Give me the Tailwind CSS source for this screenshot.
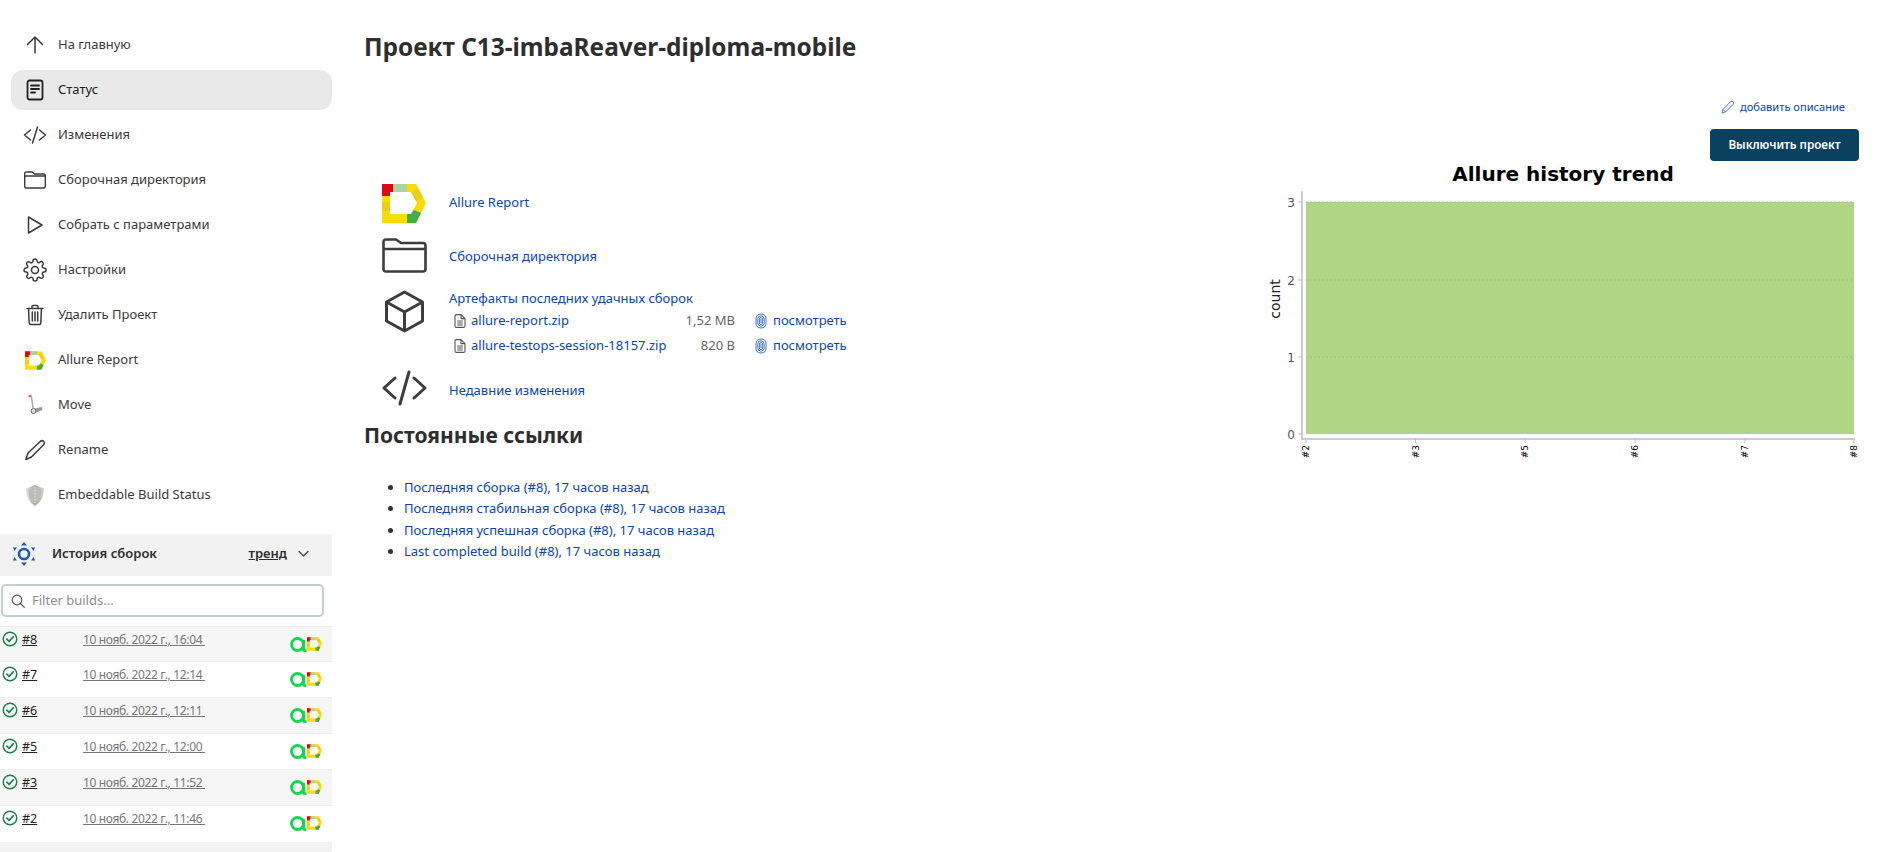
<!DOCTYPE html>
<html>

<head>
  <meta charset="utf-8">
  <script src="https://cdn.jsdelivr.net/npm/@tailwindcss/browser@4"></script>
  <title>Проект C13-imbaReaver-diploma-mobile</title>
</head>

<body class="h-[852px] w-[1892px] overflow-hidden bg-white font-['Noto_Sans',sans-serif] text-[13px] text-[#333]">
  <!-- icons used more than once -->
  <svg class="hidden">
    <symbol id="logo" viewBox="0 0 44 39">
      <path fill="#ffdc00" fill-rule="evenodd" d="M0 0H34L44 19 34 39H0ZM8 8V30H29L35 19 29 8Z" />
      <path fill="#e8cf18" d="M0 18H8V27H0ZM29 8 36 4 41 13 34 17Z" />
      <path fill="#e30613" d="M0 0H11V8H8V12H0Z" />
      <path fill="#a9d5a0" d="M11 0H25V8H11Z" />
      <path fill="#3fae49" d="M25 30H29L32 26 39 29 34 39H25Z" />
    </symbol>
    <symbol id="code" viewBox="0 0 45 36">
      <path fill="none" stroke="currentColor" stroke-width="3" stroke-linecap="round" stroke-linejoin="round" d="M13 8 2 18 13 28M32 8 43 18 32 28M27 2 18 34" />
    </symbol>
    <symbol id="folder" viewBox="0 0 45 35">
      <path fill="none" stroke="currentColor" stroke-width="2.6" stroke-linejoin="round" d="M1.5 8V4Q1.500 1.500 4 1.500H14L19 5H41Q43.500 5 43.500 7.500V31Q43.500 33.500 41 33.500H4Q1.500 33.500 1.500 31ZM1.500 11H43.500" />
    </symbol>
    <symbol id="file" viewBox="0 0 12 14">
      <path fill="none" stroke="#555" stroke-width="1.100" stroke-linejoin="round" d="M1 2Q1 .6 2.400 .6H7L11 4.600V12Q11 13.400 9.600 13.400H2.400Q1 13.400 1 12ZM7 .6V4.600H11M3.200 7H8.800M3.200 9H8.800M3.200 11H8.800" />
    </symbol>
    <symbol id="print" viewBox="0 0 12 16">
      <g fill="none" stroke="#3f78d0" stroke-width="1">
        <path d="M1 6Q1 1 6 1T11 6V10Q11 15 6 15T1 10Z" />
        <path d="M2.800 6Q2.800 2.800 6 2.800T9.200 6V10Q9.200 13.200 6 13.200T2.800 10Z" />
        <path d="M4.400 6Q4.400 4.500 6 4.500T7.600 6V10Q7.600 11.600 6 11.600T4.400 10Z" />
        <path d="M6 6V10" />
      </g>
    </symbol>
    <symbol id="ok" viewBox="0 0 16 16">
      <circle cx="8" cy="8" r="6.800" fill="none" stroke="#138347" stroke-width="1.400" />
      <path d="M4.800 8.200 7.100 10.400 11.200 5.900" fill="none" stroke="#138347" stroke-width="1.600" stroke-linecap="round" stroke-linejoin="round" />
    </symbol>
    <symbol id="testops" viewBox="0 0 17 15">
      <circle cx="7.500" cy="7.500" r="6" fill="none" stroke="#0ed84f" stroke-width="2.800" />
      <path d="M13.500 3V12.500Q13.500 13.600 15 13.600H16.500" fill="none" stroke="#0ed84f" stroke-width="2.800" />
    </symbol>
  </svg>

  <div class="flex h-full">
    <aside class="flex h-full w-[332px] shrink-0 flex-col">
      <nav class="flex flex-col gap-[5px] pt-[25px] text-[#3a3a3a]">
        <a class="ml-[11px] flex h-[40px] items-center gap-[11px] pl-[12px]">
          <svg class="size-6" viewBox="0 0 24 24" fill="none" stroke="currentColor" stroke-width="1.500" stroke-linecap="round" stroke-linejoin="round"><path d="M12 20V4M4.500 11.500 12 4l7.500 7.500" /></svg>
          <span>На главную</span>
        </a>
        <a class="ml-[11px] flex h-[40px] items-center gap-[11px] rounded-xl bg-[#e9e9e9] pl-[12px] text-[#222]">
          <svg class="size-6" viewBox="0 0 24 24" fill="none" stroke="currentColor" stroke-width="1.800" stroke-linecap="round" stroke-linejoin="round"><rect x="4.500" y="2.500" width="15" height="19" rx="2" /><path d="M8 7.500h8M8 11h8M8 14.500h4" /></svg>
          <span>Статус</span>
        </a>
        <a class="ml-[11px] flex h-[40px] items-center gap-[11px] pl-[12px]">
          <svg class="size-6" viewBox="0 0 24 24" fill="none" stroke="currentColor" stroke-width="1.500" stroke-linecap="round" stroke-linejoin="round"><path d="M7.500 7 1.500 12l6 5M16.500 7l6 5-6 5M14.500 4l-5 16" /></svg>
          <span>Изменения</span>
        </a>
        <a class="ml-[11px] flex h-[40px] items-center gap-[11px] pl-[12px]">
          <svg class="size-6" viewBox="0 0 24 24" fill="none" stroke="currentColor" stroke-width="1.400" stroke-linejoin="round"><path d="M1.700 6V5.500Q1.700 4 3.200 4H9l2.500 2H20.800Q22.300 6 22.300 7.500V18.500Q22.300 20 20.800 20H3.200Q1.700 20 1.700 18.500ZM1.700 8H22.300" /></svg>
          <span>Сборочная директория</span>
        </a>
        <a class="ml-[11px] flex h-[40px] items-center gap-[11px] pl-[12px]">
          <svg class="size-6" viewBox="0 0 24 24" fill="none" stroke="currentColor" stroke-width="1.500" stroke-linecap="round" stroke-linejoin="round"><path d="M5.500 4 19 12 5.500 20Z" /></svg>
          <span>Собрать с параметрами</span>
        </a>
        <a class="ml-[11px] flex h-[40px] items-center gap-[11px] pl-[12px]">
          <svg class="size-6" viewBox="0 0 24 24" fill="none" stroke="currentColor" stroke-width="1.500" stroke-linecap="round" stroke-linejoin="round"><circle cx="12" cy="12" r="3.500" /><path d="M19.400 15a1.650 1.650 0 0 0 .33 1.820l.06.06a2 2 0 0 1 0 2.830 2 2 0 0 1-2.830 0l-.06-.06a1.650 1.650 0 0 0-1.820-.33 1.650 1.650 0 0 0-1 1.510V21a2 2 0 0 1-2 2 2 2 0 0 1-2-2v-.09A1.650 1.650 0 0 0 9 19.400a1.650 1.650 0 0 0-1.820.33l-.06.06a2 2 0 0 1-2.830 0 2 2 0 0 1 0-2.830l.06-.06a1.650 1.650 0 0 0 .33-1.820 1.650 1.650 0 0 0-1.510-1H3a2 2 0 0 1-2-2 2 2 0 0 1 2-2h.09A1.650 1.650 0 0 0 4.600 9a1.650 1.650 0 0 0-.33-1.820l-.06-.06a2 2 0 0 1 0-2.830 2 2 0 0 1 2.830 0l.06.06a1.650 1.650 0 0 0 1.820.33H9a1.650 1.650 0 0 0 1-1.510V3a2 2 0 0 1 2-2 2 2 0 0 1 2 2v.09a1.650 1.650 0 0 0 1 1.510 1.650 1.650 0 0 0 1.820-.33l.06-.06a2 2 0 0 1 2.830 0 2 2 0 0 1 0 2.830l-.06.06a1.650 1.650 0 0 0-.33 1.820V9a1.650 1.650 0 0 0 1.510 1H21a2 2 0 0 1 2 2 2 2 0 0 1-2 2h-.09a1.650 1.650 0 0 0-1.510 1z" /></svg>
          <span>Настройки</span>
        </a>
        <a class="ml-[11px] flex h-[40px] items-center gap-[11px] pl-[12px]">
          <svg class="size-6" viewBox="0 0 24 24" fill="none" stroke="currentColor" stroke-width="1.500" stroke-linecap="round" stroke-linejoin="round"><path d="M4 5.500h16M9 5.500V3.500Q9 2.500 10 2.500h4Q15 2.500 15 3.500V5.500M5.500 5.500 6.200 20Q6.300 21.500 7.800 21.500h8.400Q17.700 21.500 17.800 20L18.500 5.500M9.300 9v9M12 9v9M14.700 9v9" /></svg>
          <span>Удалить Проект</span>
        </a>
        <a class="ml-[11px] flex h-[40px] items-center gap-[11px] pl-[12px]">
          <svg class="mx-[1.500px] h-[19px] w-[21px]"><use href="#logo" /></svg>
          <span>Allure Report</span>
        </a>
        <a class="ml-[11px] flex h-[40px] items-center gap-[11px] pl-[12px]">
          <svg class="size-6" viewBox="0 0 24 24" fill="none"><path d="M6.500 3.500 8.500 4 10 15" stroke="#aaa" stroke-width="1.500" /><path d="M5.500 3.500 8.500 2.500" stroke="#d9534f" stroke-width="1.500" /><path d="M12 15.500 19 14 19.500 17 12 20Z" fill="#9a9a9a" /><circle cx="10.500" cy="18" r="2.500" fill="#ddd" stroke="#666" /></svg>
          <span>Move</span>
        </a>
        <a class="ml-[11px] flex h-[40px] items-center gap-[11px] pl-[12px]">
          <svg class="size-6" viewBox="0 0 24 24" fill="none" stroke="currentColor" stroke-width="1.500" stroke-linecap="round" stroke-linejoin="round"><path d="M2.800 21.500 5 15 17.500 3.200Q19.200 2 20.700 3.300 22 4.800 20.800 6.500L8.500 19Z" /></svg>
          <span>Rename</span>
        </a>
        <a class="ml-[11px] flex h-[40px] items-center gap-[11px] pl-[12px]">
          <svg class="size-6" viewBox="0 0 24 24"><defs><linearGradient id="sh" x1="0" x2="1"><stop offset="0" stop-color="#e4e4e0" /><stop offset=".5" stop-color="#a9a9a3" /><stop offset="1" stop-color="#d8d8d4" /></linearGradient></defs><path d="M12 2 21 5.500Q21.500 17 12 23 2.500 17 3 5.500Z" fill="url(#sh)" /><path d="M12 4 18.500 6.800Q18.500 15 12 20 5.500 15 5.500 6.800Z" fill="#bdbdb8" /><path d="M12 4V20" stroke="#e8e8e4" stroke-dasharray="1.500 1.500" /></svg>
          <span>Embeddable Build Status</span>
        </a>
      </nav>

      <div class="mt-[19px] flex h-[42px] items-center bg-[#f2f2f2] pb-[2px] pl-[13px] pr-[23px]">
        <svg class="h-[24px] w-[22px]" viewBox="0 0 22 24"><circle cx="11" cy="12" r="5" fill="none" stroke="#1b5bb8" stroke-width="2.600" /><path d="M11 0 14 3.500H8ZM11 24 8 20.500H14ZM0 5.500 4 5.500 1.500 9ZM22 5.500 20.500 9 18 5.500ZM0 18.500 1.500 15 4 18.500ZM22 18.500 18 18.500 20.500 15Z" fill="#1b5bb8" /></svg>
        <span class="ml-[17px] font-semibold text-[#2e2e2e]">История сборок</span>
        <a class="ml-auto font-semibold text-[#2e2e2e] underline">тренд</a>
        <svg class="ml-[11px] h-[8px] w-[11px]" viewBox="0 0 11 8" fill="none" stroke="#444" stroke-width="1.300" stroke-linecap="round" stroke-linejoin="round"><path d="M1 1.500 5.500 6 10 1.500" /></svg>
      </div>

      <div class="ml-[1px] mt-[8px] flex h-[33px] w-[323px] items-center gap-[7px] rounded-[5px] border-2 border-[#c0cfd2] pl-[8px]">
        <svg class="size-[14px]" viewBox="0 0 14 14" fill="none" stroke="#555" stroke-width="1.200" stroke-linecap="round"><circle cx="6" cy="6" r="4.800" /><path d="M9.500 9.500 13.300 13.300" /></svg>
        <span class="text-[#8d8d8d]">Filter builds...</span>
      </div>

      <div class="mt-[9px] flex flex-col text-[12px] tracking-[-0.35px]">
        <div class="flex h-[36px] border-y border-[#eee] bg-[#f6f6f6] pl-[2px]">
          <svg class="mt-[4px] size-[16px]"><use href="#ok" /></svg>
          <a class="ml-[4px] mt-[4px] w-[61px] text-[12.500px] tracking-normal text-[#222] underline">#8</a>
          <a class="mt-[4px] w-[207px] whitespace-pre text-[#777] underline">10 нояб. 2022 г., 16:04 </a>
          <span class="mt-[10px] flex h-[15px] shrink-0"><svg class="h-[15px] w-[17px]"><use href="#testops" /></svg><svg class="h-[14px] w-[15px]"><use href="#logo" /></svg></span>
        </div>
        <div class="flex h-[36px] border-b border-[#eee] pl-[2px]">
          <svg class="mt-[4px] size-[16px]"><use href="#ok" /></svg>
          <a class="ml-[4px] mt-[4px] w-[61px] text-[12.500px] tracking-normal text-[#222] underline">#7</a>
          <a class="mt-[4px] w-[207px] whitespace-pre text-[#777] underline">10 нояб. 2022 г., 12:14 </a>
          <span class="mt-[10px] flex h-[15px] shrink-0"><svg class="h-[15px] w-[17px]"><use href="#testops" /></svg><svg class="h-[14px] w-[15px]"><use href="#logo" /></svg></span>
        </div>
        <div class="flex h-[36px] border-b border-[#eee] bg-[#f6f6f6] pl-[2px]">
          <svg class="mt-[4px] size-[16px]"><use href="#ok" /></svg>
          <a class="ml-[4px] mt-[4px] w-[61px] text-[12.500px] tracking-normal text-[#222] underline">#6</a>
          <a class="mt-[4px] w-[207px] whitespace-pre text-[#777] underline">10 нояб. 2022 г., 12:11 </a>
          <span class="mt-[10px] flex h-[15px] shrink-0"><svg class="h-[15px] w-[17px]"><use href="#testops" /></svg><svg class="h-[14px] w-[15px]"><use href="#logo" /></svg></span>
        </div>
        <div class="flex h-[36px] border-b border-[#eee] pl-[2px]">
          <svg class="mt-[4px] size-[16px]"><use href="#ok" /></svg>
          <a class="ml-[4px] mt-[4px] w-[61px] text-[12.500px] tracking-normal text-[#222] underline">#5</a>
          <a class="mt-[4px] w-[207px] whitespace-pre text-[#777] underline">10 нояб. 2022 г., 12:00 </a>
          <span class="mt-[10px] flex h-[15px] shrink-0"><svg class="h-[15px] w-[17px]"><use href="#testops" /></svg><svg class="h-[14px] w-[15px]"><use href="#logo" /></svg></span>
        </div>
        <div class="flex h-[36px] border-b border-[#eee] bg-[#f6f6f6] pl-[2px]">
          <svg class="mt-[4px] size-[16px]"><use href="#ok" /></svg>
          <a class="ml-[4px] mt-[4px] w-[61px] text-[12.500px] tracking-normal text-[#222] underline">#3</a>
          <a class="mt-[4px] w-[207px] whitespace-pre text-[#777] underline">10 нояб. 2022 г., 11:52 </a>
          <span class="mt-[10px] flex h-[15px] shrink-0"><svg class="h-[15px] w-[17px]"><use href="#testops" /></svg><svg class="h-[14px] w-[15px]"><use href="#logo" /></svg></span>
        </div>
        <div class="flex h-[36px] pl-[2px]">
          <svg class="mt-[4px] size-[16px]"><use href="#ok" /></svg>
          <a class="ml-[4px] mt-[4px] w-[61px] text-[12.500px] tracking-normal text-[#222] underline">#2</a>
          <a class="mt-[4px] w-[207px] whitespace-pre text-[#777] underline">10 нояб. 2022 г., 11:46 </a>
          <span class="mt-[10px] flex h-[15px] shrink-0"><svg class="h-[15px] w-[17px]"><use href="#testops" /></svg><svg class="h-[14px] w-[15px]"><use href="#logo" /></svg></span>
        </div>
      </div>
      <div class="flex-1 bg-[#f2f2f2]"></div>
    </aside>

    <main class="flex min-w-0 flex-1 flex-col pl-[32px] pr-[33px] pt-[31px]">
      <h1 class="h-[32px] text-[24.400px] font-bold leading-[32px] text-[#2e2e2e]">Проект C13-imbaReaver-diploma-mobile</h1>

      <div class="mt-[32px] flex justify-between">
        <div class="pt-[88px]">
          <div class="flex flex-col pl-[18px] text-[#0a46b4]">
            <div class="flex h-[40px] items-center">
              <svg class="h-[39px] w-[44px]"><use href="#logo" /></svg>
              <a class="ml-[23px]">Allure Report</a>
            </div>
            <div class="mt-[12px] flex h-[40px] items-center">
              <svg class="h-[35px] w-[45px] text-[#3d3d3d]"><use href="#folder" /></svg>
              <a class="ml-[22px] pt-[4px]">Сборочная директория</a>
            </div>
            <div class="mt-[12px] flex h-[71px]">
              <svg class="mt-[3px] h-[43px] w-[45px] shrink-0 text-[#3d3d3d]" viewBox="0 0 45 43" fill="none" stroke="currentColor" stroke-width="3" stroke-linejoin="round"><path d="M22.500 2 40.500 12V31L22.500 41 4.500 31V12ZM4.500 12 22.500 22 40.500 12M22.500 22V41" /></svg>
              <div class="ml-[22px] flex flex-col">
                <a class="h-[21px] leading-[22px]">Артефакты последних удачных сборок</a>
                <div class="grid grid-cols-[17px_189px_75px_18px_auto] items-center whitespace-nowrap pl-[5px] leading-[25px]">
                  <svg class="h-[14px] w-[12px]"><use href="#file" /></svg>
                  <a>allure-report.zip</a>
                  <span class="text-right text-[#666]">1,52 MB</span>
                  <svg class="ml-[20px] h-[16px] w-[12px] overflow-visible"><use href="#print" /></svg>
                  <a class="ml-[20px]">посмотреть</a>
                  <svg class="h-[14px] w-[12px]"><use href="#file" /></svg>
                  <a>allure-testops-session-18157.zip</a>
                  <span class="text-right text-[#666]">820 B</span>
                  <svg class="ml-[20px] h-[16px] w-[12px] overflow-visible"><use href="#print" /></svg>
                  <a class="ml-[20px]">посмотреть</a>
                </div>
              </div>
            </div>
            <div class="mt-[10px] flex h-[40px] items-center">
              <svg class="h-[36px] w-[45px] text-[#3d3d3d]"><use href="#code" /></svg>
              <a class="ml-[22px] pt-[6px]">Недавние изменения</a>
            </div>
          </div>

          <h2 class="mt-[13px] h-[28px] text-[21px] font-bold leading-[28px] text-[#2e2e2e]">Постоянные ссылки</h2>
          <ul class="mt-[28px] list-disc pl-[40px] leading-[21.330px] text-[#333] marker:text-[#333]">
            <li><a class="text-[#0a46b4]">Последняя сборка (#8), 17 часов назад</a></li>
            <li><a class="text-[#0a46b4]">Последняя стабильная сборка (#8), 17 часов назад</a></li>
            <li><a class="text-[#0a46b4]">Последняя успешная сборка (#8), 17 часов назад</a></li>
            <li><a class="text-[#0a46b4]">Last completed build (#8), 17 часов назад</a></li>
          </ul>
        </div>

        <div class="flex w-[600px] flex-col items-end">
          <a class="mr-[14px] flex h-[24px] items-center gap-[5px] text-[11.100px] text-[#0a46b4]">
            <svg class="size-[14px]" viewBox="0 0 14 14" fill="none" stroke="#3f78d0" stroke-width="1" stroke-linejoin="round"><path d="M1 13 2 9.500 9.800 1.500Q11 .6 12.200 1.700 13.300 3 12.300 4.200L4.500 12ZM2 9.500 4.500 12" /></svg>
            добавить описание
          </a>
          <button class="mt-[10px] h-[32px] w-[149px] rounded-[4px] bg-[#0b4160] text-[11.700px] font-semibold text-white">Выключить проект</button>
          <svg class="h-[300px] w-[600px] font-['DejaVu_Sans',sans-serif]" viewBox="-1 0 600 300">
            <text x="303" y="20" text-anchor="middle" font-size="20" font-weight="700" fill="#000">Allure history trend</text>
            <text transform="translate(20 138) rotate(-90)" text-anchor="middle" font-size="14" fill="#222">count</text>
            <rect x="46" y="41" width="548" height="232" fill="#afd684" />
            <path d="M46 41H594M46 119H594M46 196H594" stroke="#98c374" stroke-dasharray="2 2" />
            <path d="M42 30V279M42 278H595" stroke="#bdbdbd" stroke-width="1.500" fill="none" />
            <path d="M38 41H42M38 119H42M38 196H42M38 273H42M46 278V282M155.500 278V282M265 278V282M375 278V282M485 278V282M594 278V282" stroke="#bdbdbd" />
            <g font-size="12" fill="#555" text-anchor="end">
              <text x="35" y="46">3</text>
              <text x="35" y="124">2</text>
              <text x="35" y="201">1</text>
              <text x="35" y="278">0</text>
            </g>
            <g font-size="9" fill="#000" text-anchor="end">
              <text transform="translate(49 284) rotate(-90)">#2</text>
              <text transform="translate(158.500 284) rotate(-90)">#3</text>
              <text transform="translate(268 284) rotate(-90)">#5</text>
              <text transform="translate(378 284) rotate(-90)">#6</text>
              <text transform="translate(488 284) rotate(-90)">#7</text>
              <text transform="translate(597 284) rotate(-90)">#8</text>
            </g>
          </svg>
        </div>
      </div>
    </main>
  </div>
</body>

</html>
